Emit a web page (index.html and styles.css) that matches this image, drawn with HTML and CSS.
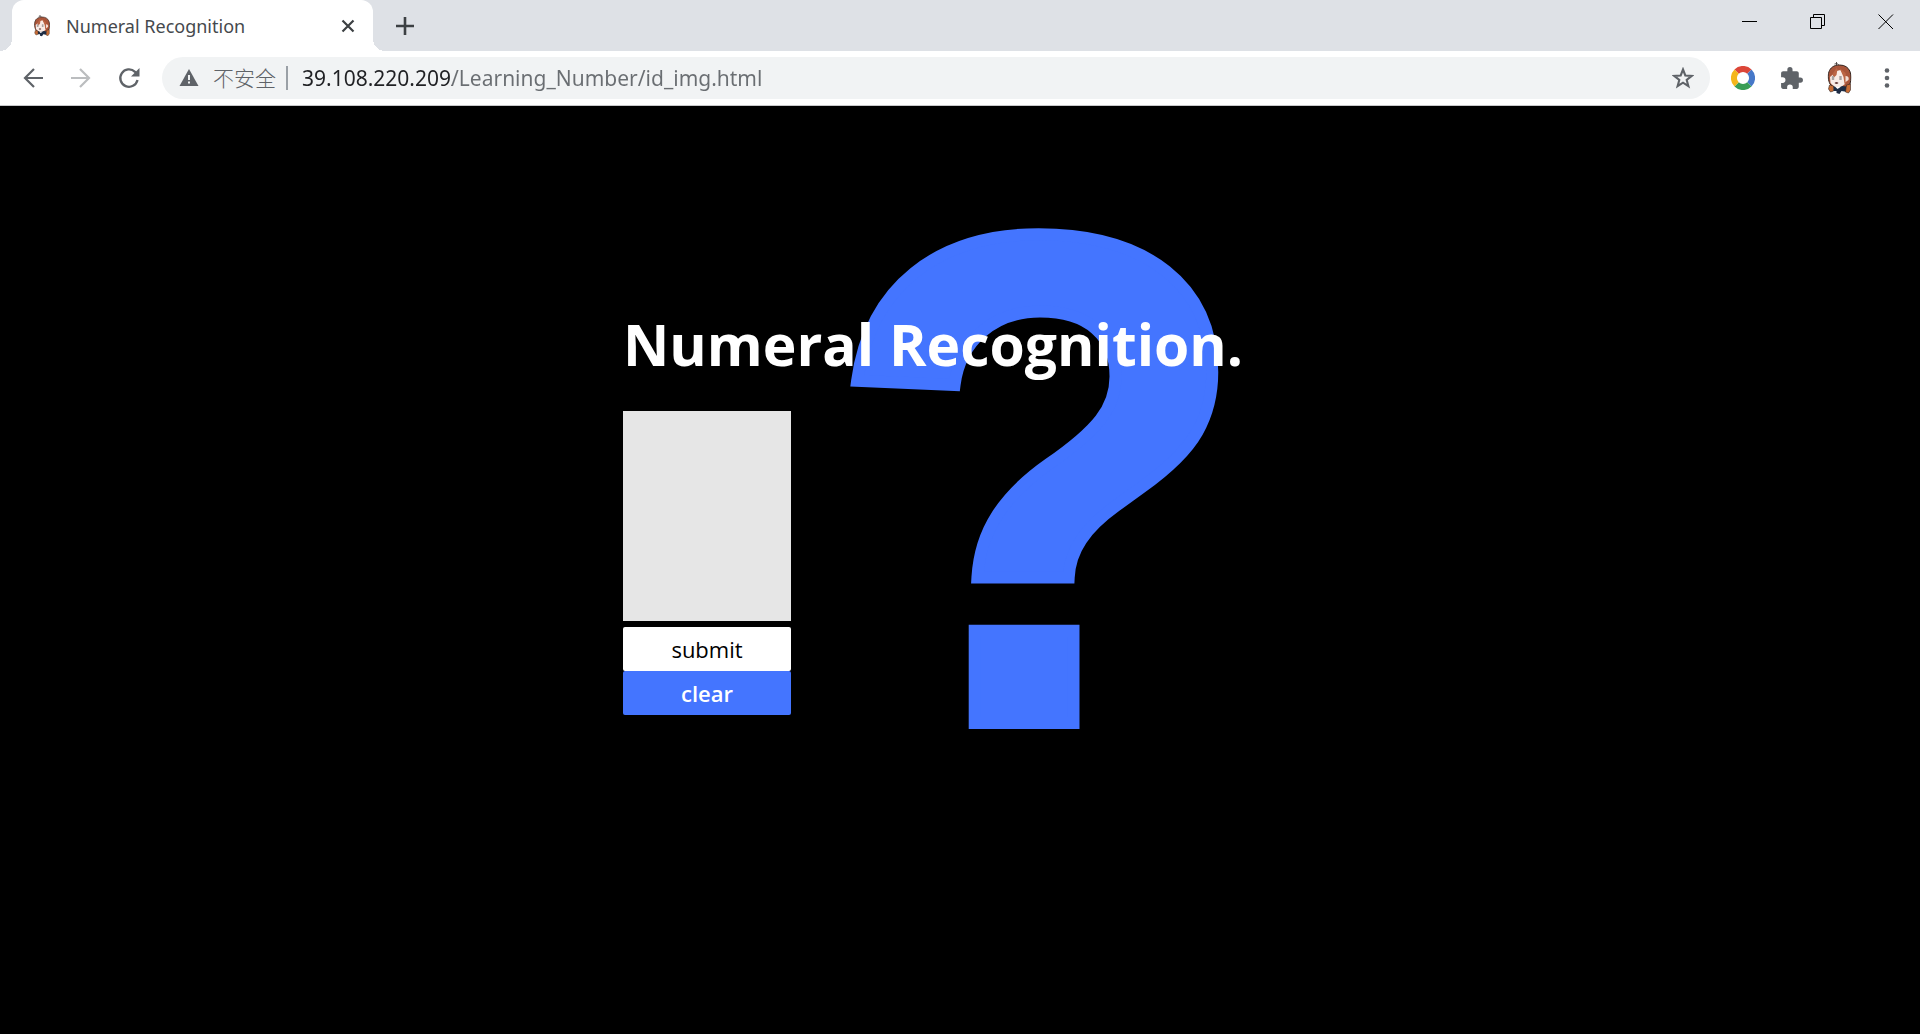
FILE: index.html
```
<!DOCTYPE html>
<html lang="en">
<head>
<meta charset="utf-8">
<meta name="viewport" content="width=device-width, initial-scale=1">
<title>Numeral Recognition</title>
<link rel="stylesheet" href="styles.css">
</head>
<body>
<svg class="defs" aria-hidden="true">
  <symbol id="avatar" viewBox="0 0 24 33">
    <path d="M7 2q3-2 5 2M9 0v3" fill="none" stroke="#4a4240" stroke-width=".9"/>
    <path d="M2.500 22C-1 15 0 3 12 3c11 0 13 10 10.500 19l-4 3h-13z" fill="#a9553a" stroke="#33241f" stroke-width="1"/>
    <path d="M2.500 15 6 12l3-3 4-1 4 5 1.500 4-1 5-4 3H7l-4-4z" fill="#f9ece7"/>
    <path d="M5 12 9 6l1 1-1 6-3 3zM12 6l6 5 2 8-3 3-1-7z" fill="#bb6545"/>
    <path d="M18 14q4 0 3 4l-3 2z" fill="#f2ddd4"/>
    <path d="M5.500 14v4M13 14v4" stroke="#a8a3a2" stroke-width="2.400"/>
    <path d="M7 21q2-2 4 0-2 2-4 0" fill="#653a38"/>
    <path d="m6 24 4 2 5-2 4 1 1 5-6-1-2 3-3-1v-2H6z" fill="#1d2c45"/>
    <path d="m8 25 2 2 3-2z" fill="#fff"/>
    <path d="m2 23 4 1v5l-3 1-2-3zm17 0 4-1v6l-2 3-3-1z" fill="#c96d36" stroke="#3b2a25" stroke-width=".6"/>
  </symbol>
</svg>
<header class="browser">
  <div class="tabstrip">
    <div class="tab">
      <svg class="favicon" viewBox="0 0 24 33"><use href="#avatar"/></svg>
      <span class="tab-title">Numeral Recognition</span>
      <button class="icon-button tab-close" aria-label="Close tab"><svg width="14" height="14" viewBox="0 0 14 14"><path d="m1.500 1.500 11 11M12.500 1.500l-11 11" fill="none" stroke="#3c4043" stroke-width="2.200"/></svg></button>
    </div>
    <button class="icon-button new-tab" aria-label="New tab"><svg width="18" height="18" viewBox="0 0 18 18"><path d="M9 0v18M0 9h18" stroke="#3c4043" stroke-width="2.600"/></svg></button>
    <div class="window-controls">
      <button class="icon-button window-button" aria-label="Minimize"><svg width="16" height="16" viewBox="0 0 16 16"><path d="M0 7.500h15" stroke="#000"/></svg></button>
      <button class="icon-button window-button" aria-label="Restore"><svg width="16" height="16" viewBox="0 0 16 16"><path d="M.5 3.500h11v11H.5zM3.500 3V.5h11v11H12" fill="none" stroke="#000"/></svg></button>
      <button class="icon-button window-button" aria-label="Close"><svg width="16" height="16" viewBox="0 0 16 16"><path d="m.5.500 14.500 14.500M15 .5.500 15" stroke="#000"/></svg></button>
    </div>
  </div>
  <div class="toolbar">
    <div class="nav-buttons">
      <button class="icon-button nav-button" aria-label="Back"><svg width="20" height="20" viewBox="0 0 20 20"><path d="M20 10H2M11 1l-9 9 9 9" fill="none" stroke="#5f6368" stroke-width="2.200"/></svg></button>
      <button class="icon-button nav-button" aria-label="Forward" disabled><svg width="20" height="20" viewBox="0 0 20 20"><path d="M0 10h18M9 1l9 9-9 9" fill="none" stroke="#bbbdbf" stroke-width="2.200"/></svg></button>
      <button class="icon-button nav-button" aria-label="Reload"><svg width="22" height="22" viewBox="0 0 22 22"><path d="M19.500 13A8.700 8.700 0 1 1 17 4.800l1.500 1.700" fill="none" stroke="#5f6368" stroke-width="2.300"/><path d="M21.500 1v8.500H13z" fill="#5f6368"/></svg></button>
    </div>
    <div class="omnibox">
      <button class="security"><svg width="20" height="18" viewBox="0 0 20 18"><path d="M10 0 19.500 17H.5z" fill="#5f6368"/><path d="M10 6v5M10 12.500v2" stroke="#f1f3f4" stroke-width="2"/></svg><span lang="zh-CN">不安全</span></button>
      <input class="address" type="text" aria-label="Address" value="39.108.220.209/Learning_Number/id_img.html">
      <button class="icon-button" aria-label="Bookmark this page"><svg width="22" height="22" viewBox="0 0 22 22"><path d="m11 2.500 2.300 6 6.400.4-5 4 1.700 6.300-5.400-3.500-5.400 3.500 1.700-6.300-5-4 6.400-.4z" fill="none" stroke="#5f6368" stroke-width="2.100"/></svg></button>
    </div>
    <div class="extensions">
      <button class="icon-button extension" aria-label="Color extension"><svg width="24" height="24" viewBox="0 0 24 24"><g fill="none" stroke-width="6"><path d="M5.600 5.600a9 9 0 0 1 12.800 0" stroke="#dc4638"/><path d="M18.400 5.600a9 9 0 0 1 0 12.800" stroke="#4678c8"/><path d="M18.400 18.400a9 9 0 0 1-12.800 0" stroke="#399d56"/><path d="M5.600 18.400a9 9 0 0 1 0-12.800" stroke="#f4b61b"/></g></svg></button>
      <button class="icon-button extension" aria-label="Extensions"><svg width="25" height="25" viewBox="0 0 24 24"><path d="M20.500 11H19V7c0-1.100-.9-2-2-2h-4V3.500a2.500 2.500 0 0 0-5 0V5H4c-1.100 0-2 .9-2 2v3.800h1.500a2.700 2.700 0 0 1 0 5.400H2V20c0 1.100.9 2 2 2h3.800v-1.500a2.700 2.700 0 0 1 5.400 0V22H17c1.100 0 2-.9 2-2v-4h1.500a2.500 2.500 0 0 0 0-5z" fill="#5f6368"/></svg></button>
      <button class="icon-button extension" aria-label="Profile"><svg width="25" height="33" viewBox="0 0 24 33"><use href="#avatar"/></svg></button>
      <button class="icon-button extension" aria-label="Menu"><svg width="6" height="20" viewBox="0 0 6 20"><g fill="#5f6368"><circle cx="3" cy="2.500" r="2.300"/><circle cx="3" cy="10" r="2.300"/><circle cx="3" cy="17.500" r="2.300"/></g></svg></button>
    </div>
  </div>
</header>
<main class="page">
  <section class="recognizer">
    <output class="result" for="pad">?</output>
    <h1 class="title">Numeral Recognition.</h1>
    <canvas class="pad" id="pad" width="168" height="210"></canvas>
    <div class="actions">
      <button class="action submit">submit</button>
      <button class="action clear">clear</button>
    </div>
  </section>
</main>
</body>
</html>
```
FILE: styles.css
```
* { box-sizing: border-box; }

body {
  margin: 0;
  min-height: 100vh;
  display: flex;
  flex-direction: column;
  background: #000;
  font-family: "Noto Sans", "Noto Sans CJK SC", sans-serif;
}

button {
  border: 0;
  padding: 0;
  background: none;
  font-family: inherit;
  cursor: pointer;
}

svg { display: block; }
.defs { position: absolute; width: 0; height: 0; }

.icon-button {
  display: flex;
  align-items: center;
  justify-content: center;
  flex: none;
}

/* Browser chrome */
.browser { background: #fff; border-bottom: 1px solid #c8c9cb; }

.tabstrip {
  display: flex;
  height: 51px;
  padding-left: 12px;
  background: #dee1e6;
}

.tab {
  position: relative;
  display: flex;
  align-items: center;
  width: 361px;
  padding: 0 18px 0 20px;
  border-radius: 12px 12px 0 0;
  background: #fff;
}

.tab::before,
.tab::after {
  content: "";
  position: absolute;
  bottom: 0;
  width: 12px;
  height: 12px;
}
.tab::before { right: 100%; background: radial-gradient(circle at 0 0, transparent 12px, #fff 12px); }
.tab::after { left: 100%; background: radial-gradient(circle at 100% 0, transparent 12px, #fff 12px); }

.favicon { width: 20px; height: 22px; flex: none; }
.tab-title { flex: 1; margin-left: 14px; font-size: 18px; color: #45494d; }
.tab-close { width: 14px; height: 14px; }
.new-tab { width: 64px; }

.window-controls { display: flex; height: 43px; margin-left: auto; }
.window-button { width: 68px; }

.toolbar { display: flex; align-items: center; height: 54px; }
.nav-buttons { display: flex; padding: 0 9px; }
.nav-button { width: 48px; height: 42px; }

.omnibox {
  display: flex;
  align-items: center;
  flex: 1;
  min-width: 0;
  height: 42px;
  padding: 0 16px 0 17px;
  border-radius: 21px;
  background: #f1f3f4;
}

.security {
  display: flex;
  align-items: center;
  gap: 14px;
  height: 24px;
  padding-right: 10px;
  border-right: 2px solid #9aa0a6;
  font-size: 21px;
  font-weight: 300;
  line-height: 24px;
  color: #5f6368;
}

.address {
  flex: 1;
  min-width: 0;
  height: 32px;
  margin-left: 14px;
  padding: 0;
  border: 0;
  outline: 0;
  font: 21px/32px "Noto Sans", sans-serif;
  color: #5f6368;
  /* Host name is darker than the path that follows it */
  background: linear-gradient(90deg, #202124 150px, #6a6e72 150px);
  -webkit-background-clip: text;
  background-clip: text;
  -webkit-text-fill-color: transparent;
}

.extensions { display: flex; padding: 0 9px; }
.extension { width: 48px; height: 42px; }

/* Page */
.page { flex: 1; padding: 198px 24px 48px; }

.recognizer {
  position: relative;
  max-width: 674px;
  margin: 0 auto;
  font-family: "Open Sans", sans-serif;
}

.result {
  position: absolute;
  top: -224px;
  left: 202px;
  font: bold 700px/800px "Liberation Sans", sans-serif;
  color: #4475ff;
  -webkit-text-stroke: 12px #4475ff;
}

.title {
  position: relative;
  margin: 0;
  font-size: 57px;
  font-weight: 700;
  line-height: 80px;
  color: #fff;
  white-space: nowrap;
}

.pad {
  position: relative;
  display: block;
  margin-top: 27px;
  background: #e6e6e6;
}

.actions {
  position: relative;
  display: flex;
  flex-direction: column;
  width: 168px;
  margin-top: 6px;
}

.action {
  height: 44px;
  border-radius: 2px;
  font-size: 22px;
  font-weight: 600;
}
.submit { background: #fff; color: #000; font-weight: 500; }
.clear { background: #4475ff; color: #fff; }
```
